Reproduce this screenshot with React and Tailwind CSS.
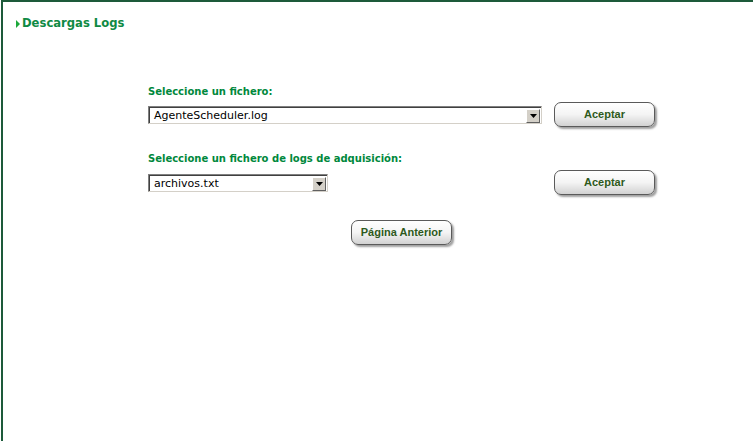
import React from "react";

const Btn = ({ children, className = "" }) => (
  <button
    className={`h-[25px] w-[101px] rounded-[7px] border border-[#5a5a5a] bg-gradient-to-b from-white via-[#f4f4f4] to-[#d2d2d2] text-[11px] font-bold text-[#2e5a1c] shadow-[2px_2px_2px_#a0a0a0] ${className}`}
    style={{ fontFamily: '"Liberation Sans", Arial, sans-serif' }}
  >
    {children}
  </button>
);

const Select = ({ value, width }) => (
  <div
    className={`mt-[2px] flex h-[18px] items-center border-t border-l border-t-[#808080] border-l-[#808080] border-b border-r border-b-[#d4d0c8] border-r-[#d4d0c8] bg-white ${width}`}
  >
    <div className="flex h-full flex-1 items-center border-t border-l border-[#404040] border-b-0 border-r-0">
      <span
        className="flex-1 pl-[4px] text-[11px] leading-none text-black"
        style={{ fontFamily: '"DejaVu Sans", Verdana, sans-serif' }}
      >
        {value}
      </span>
      <div className="mr-px flex h-[14px] w-[14px] items-center justify-center border border-t-white border-l-white border-b-[#606060] border-r-[#606060] bg-[#d4d0c8]">
        <svg width="7" height="4" viewBox="0 0 7 4">
          <path d="M0 0h7L3.5 4z" fill="#000" />
        </svg>
      </div>
    </div>
  </div>
);

const labelCls = "h-[12px] text-[10px] font-bold leading-[12px] text-[#00883c]";

export default function App() {
  return (
    <div
      className="h-[441px] w-[753px] overflow-hidden bg-white pl-px"
      style={{ fontFamily: '"DejaVu Sans", Verdana, sans-serif' }}
    >
      <div className="h-full border-t-2 border-l-2 border-[#1d5a3a]">
        <div className="flex items-center pt-[14px] pl-[13px] leading-[15px]">
          <svg width="4" height="8" viewBox="0 0 4 8" className="mr-[2px]">
            <path d="M0 0l4 4-4 4z" fill="#1ca83a" />
          </svg>
          <span className="text-[11.6px] font-bold text-[#0f8a44]">Descargas Logs</span>
        </div>

        <div className="ml-[145px] w-[507px] pt-[55px]">
          <div className={labelCls}>Seleccione un fichero:</div>
          <div className="mt-[3px] flex h-[26px] items-center justify-between">
            <Select value="AgenteScheduler.log" width="w-[394px]" />
            <Btn>Aceptar</Btn>
          </div>

          <div className={`${labelCls} mt-[26px]`}>
            Seleccione un fichero de logs de adquisición:
          </div>
          <div className="mt-[4px] flex h-[26px] items-center justify-between">
            <Select value="archivos.txt" width="w-[180px]" />
            <Btn>Aceptar</Btn>
          </div>

          <div className="mt-[25px] flex justify-center">
            <Btn className="h-[24px]">Página Anterior</Btn>
          </div>
        </div>
      </div>
    </div>
  );
}
